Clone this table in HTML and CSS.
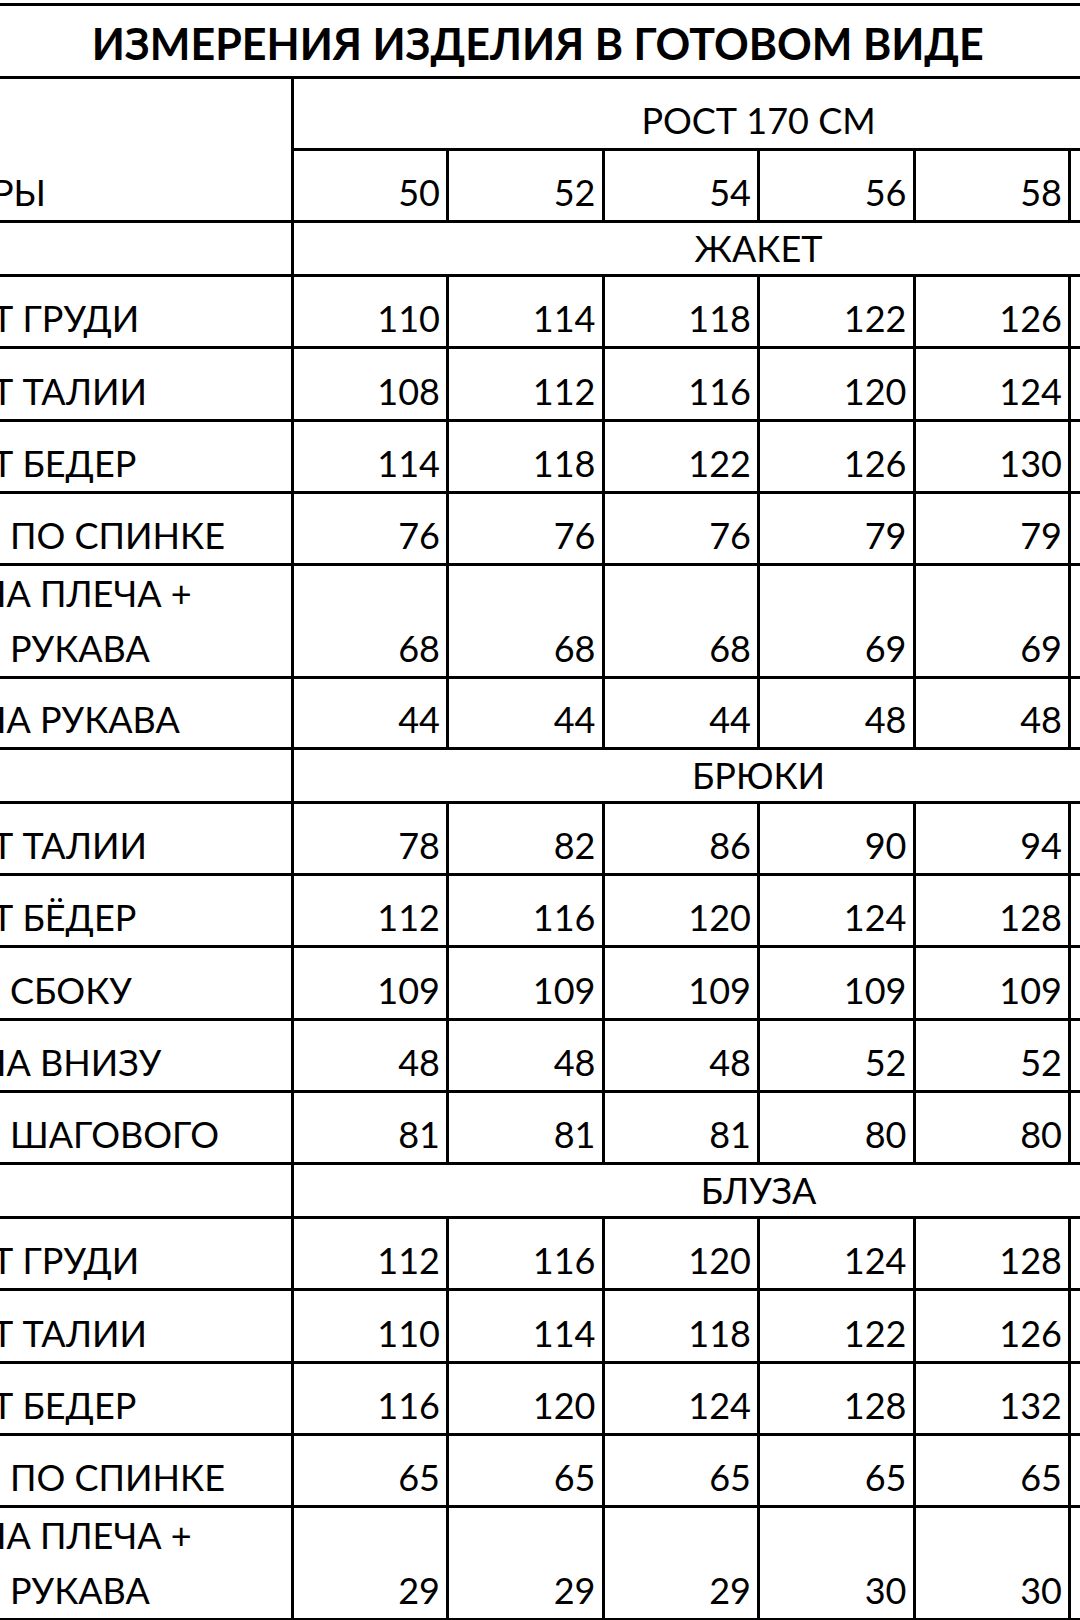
FILE: index.html
```html
<!DOCTYPE html>
<html lang="ru">
<head>
<meta charset="utf-8">
<title>Измерения изделия в готовом виде</title>
<link rel="stylesheet" href="styles.css">
</head>
<body>
<div class="sheet">
<table class="grid">
<colgroup>
<col class="c-label"><col class="c-size"><col class="c-size"><col class="c-size"><col class="c-size"><col class="c-size"><col class="c-size">
</colgroup>
<tbody>
<tr class="r-title"><td colspan="7" class="title">ИЗМЕРЕНИЯ ИЗДЕЛИЯ В ГОТОВОМ ВИДЕ</td></tr>
<tr class="r-head"><td rowspan="2" class="label"><span class="l-t">РЫ</span></td><td colspan="6" class="center">РОСТ 170 СМ</td></tr>
<tr class="r-head"><td class="num">50</td><td class="num">52</td><td class="num">54</td><td class="num">56</td><td class="num">58</td><td class="num"></td></tr>

<tr class="r-sec"><td class="label"></td><td colspan="6" class="center">ЖАКЕТ</td></tr>
<tr class="r-data"><td class="label"><span class="l-t">Т ГРУДИ</span></td><td class="num">110</td><td class="num">114</td><td class="num">118</td><td class="num">122</td><td class="num">126</td><td class="num"></td></tr>
<tr class="r-data"><td class="label"><span class="l-t">Т ТАЛИИ</span></td><td class="num">108</td><td class="num">112</td><td class="num">116</td><td class="num">120</td><td class="num">124</td><td class="num"></td></tr>
<tr class="r-data"><td class="label"><span class="l-t">Т БЕДЕР</span></td><td class="num">114</td><td class="num">118</td><td class="num">122</td><td class="num">126</td><td class="num">130</td><td class="num"></td></tr>
<tr class="r-data"><td class="label"><span class="l-sp">ПО СПИНКЕ</span></td><td class="num">76</td><td class="num">76</td><td class="num">76</td><td class="num">79</td><td class="num">79</td><td class="num"></td></tr>
<tr class="r-two"><td class="label"><span class="l-n">НА ПЛЕЧА +</span><br><span class="l-sp">РУКАВА</span></td><td class="num">68</td><td class="num">68</td><td class="num">68</td><td class="num">69</td><td class="num">69</td><td class="num"></td></tr>
<tr class="r-data r-short"><td class="label"><span class="l-n">НА РУКАВА</span></td><td class="num">44</td><td class="num">44</td><td class="num">44</td><td class="num">48</td><td class="num">48</td><td class="num"></td></tr>

<tr class="r-sec"><td class="label"></td><td colspan="6" class="center">БРЮКИ</td></tr>
<tr class="r-data"><td class="label"><span class="l-t">Т ТАЛИИ</span></td><td class="num">78</td><td class="num">82</td><td class="num">86</td><td class="num">90</td><td class="num">94</td><td class="num"></td></tr>
<tr class="r-data"><td class="label"><span class="l-t">Т БЁДЕР</span></td><td class="num">112</td><td class="num">116</td><td class="num">120</td><td class="num">124</td><td class="num">128</td><td class="num"></td></tr>
<tr class="r-data"><td class="label"><span class="l-sp">СБОКУ</span></td><td class="num">109</td><td class="num">109</td><td class="num">109</td><td class="num">109</td><td class="num">109</td><td class="num"></td></tr>
<tr class="r-data"><td class="label"><span class="l-n">НА ВНИЗУ</span></td><td class="num">48</td><td class="num">48</td><td class="num">48</td><td class="num">52</td><td class="num">52</td><td class="num"></td></tr>
<tr class="r-data"><td class="label"><span class="l-sp">ШАГОВОГО</span></td><td class="num">81</td><td class="num">81</td><td class="num">81</td><td class="num">80</td><td class="num">80</td><td class="num"></td></tr>

<tr class="r-sec"><td class="label"></td><td colspan="6" class="center">БЛУЗА</td></tr>
<tr class="r-data"><td class="label"><span class="l-t">Т ГРУДИ</span></td><td class="num">112</td><td class="num">116</td><td class="num">120</td><td class="num">124</td><td class="num">128</td><td class="num"></td></tr>
<tr class="r-data"><td class="label"><span class="l-t">Т ТАЛИИ</span></td><td class="num">110</td><td class="num">114</td><td class="num">118</td><td class="num">122</td><td class="num">126</td><td class="num"></td></tr>
<tr class="r-data"><td class="label"><span class="l-t">Т БЕДЕР</span></td><td class="num">116</td><td class="num">120</td><td class="num">124</td><td class="num">128</td><td class="num">132</td><td class="num"></td></tr>
<tr class="r-data"><td class="label"><span class="l-sp">ПО СПИНКЕ</span></td><td class="num">65</td><td class="num">65</td><td class="num">65</td><td class="num">65</td><td class="num">65</td><td class="num"></td></tr>
<tr class="r-two r-last"><td class="label"><span class="l-n">НА ПЛЕЧА +</span><br><span class="l-sp">РУКАВА</span></td><td class="num">29</td><td class="num">29</td><td class="num">29</td><td class="num">30</td><td class="num">30</td><td class="num"></td></tr>
</tbody>
</table>
</div>
</body>
</html>
```

FILE: styles.css
```css
html, body {
  margin: 0;
  padding: 0;
  background: #fff;
}

body {
  font-family: Lato, "Open Sans", "DejaVu Sans", sans-serif;
  color: #000;
}

.sheet {
  width: 1080px;
  height: 1620px;
  overflow: hidden;
  padding-top: 3px;
  box-sizing: border-box;
}

.grid {
  border-collapse: collapse;
  table-layout: fixed;
  width: 1225px;
  font-size: 36px;
  line-height: 55px;
}

.c-label { width: 292px; }
.c-size { width: 155.5px; }

.grid td {
  border: 3px solid #000;
  padding: 0;
  vertical-align: bottom;
  white-space: nowrap;
  overflow: visible;
}

.grid td.label,
.grid td.title {
  border-left: none;
}

.title {
  font-weight: 700;
  font-size: 43px;
  text-align: center;
  padding: 0 148px 5px 0 !important;
}

.center {
  text-align: center;
}

.num {
  text-align: right;
  padding-right: 6px !important;
}

.label {
  text-align: left;
}

.l-t { margin-left: -8px; }
.l-n { margin-left: -21px; }
.l-sp { margin-left: 10px; }

.r-title { height: 73px; }
.r-head { height: 72px; }
.r-sec { height: 54px; }
.grid .r-sec td {
  line-height: 44px;
  padding-bottom: 4px;
}
.r-data { height: 72.3px; }
.r-short { height: 70.5px; }
.r-two { height: 110px; }
.r-last { height: 108.5px; }
```
